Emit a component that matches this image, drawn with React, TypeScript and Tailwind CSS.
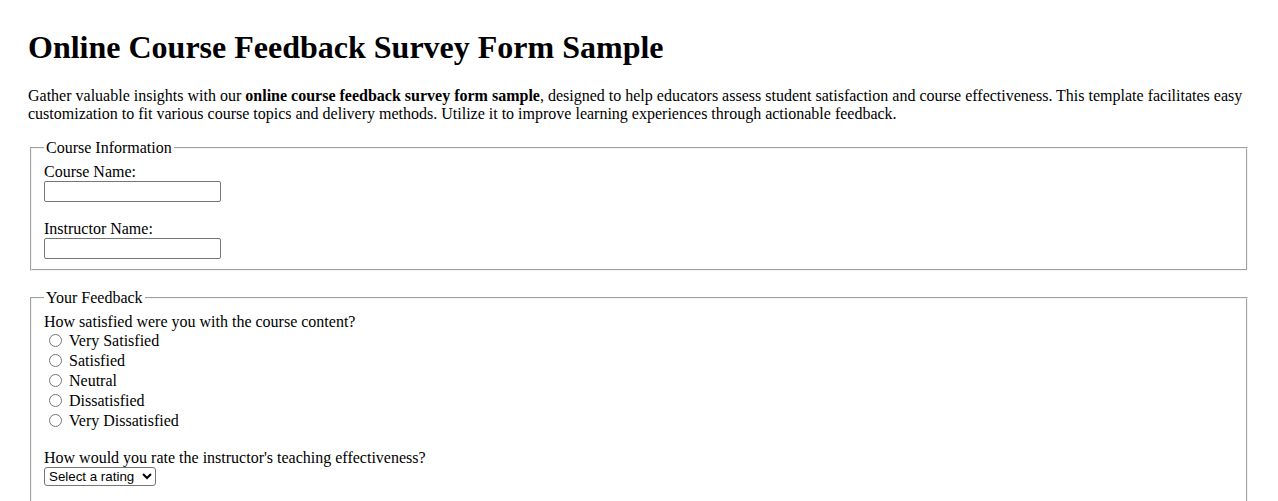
import React from "react";

export default function App() {
  const options = ["Very Satisfied", "Satisfied", "Neutral", "Dissatisfied", "Very Dissatisfied"];
  return (
    <div className="bg-white text-black min-h-screen px-[28px] pt-[29px] pb-[40px] text-[16px] leading-[normal] [font-family:'Liberation_Serif','Times_New_Roman',serif]">
      <h1 className="text-[32px] font-bold leading-[normal] mb-[21px]">Online Course Feedback Survey Form Sample</h1>
      <p className="mb-[16px]">
        Gather valuable insights with our <strong className="font-bold">online course feedback survey form sample</strong>, designed to help educators assess student satisfaction and course effectiveness. This template facilitates easy customization to fit various course topics and delivery methods. Utilize it to improve learning experiences through actionable feedback.
      </p>
      <form>
        <fieldset className="mx-[2px] border-2 [border-style:groove] border-[#f4f4f4] px-[12px] pt-[5.6px] pb-[10px]">
          <legend className="px-[2px]">Course Information</legend>
          <label className="block" htmlFor="course">Course Name:</label>
          <input id="course" type="text" className="block w-[177px] h-[21px] border border-[#767676] rounded-[2px] bg-white px-[2px]" />
          <div className="h-[18px]" />
          <label className="block" htmlFor="instructor">Instructor Name:</label>
          <input id="instructor" type="text" className="block w-[177px] h-[21px] border border-[#767676] rounded-[2px] bg-white px-[2px]" />
        </fieldset>
        <div className="h-[18px]" />
        <fieldset className="mx-[2px] border-2 [border-style:groove] border-[#f4f4f4] px-[12px] pt-[6.6px] pb-[10px]">
          <legend className="px-[2px]">Your Feedback</legend>
          <div>How satisfied were you with the course content?</div>
          {options.map((o) => (
            <div key={o} className="flex items-center h-[20px]">
              <input type="radio" name="satisfaction" className="m-[0_3px_1px_5px] w-[13px] h-[13px]" />
              <span className="ml-[4px]">{o}</span>
            </div>
          ))}
          <div className="h-[18px]" />
          <div>How would you rate the instructor's teaching effectiveness?</div>
          <select className="block w-[112px] h-[19px] border border-[#767676] rounded-[3px] bg-white text-[13.333px] [font-family:'Liberation_Sans',Arial,sans-serif]">
            <option>Select a rating</option>
            <option>Excellent</option>
            <option>Good</option>
            <option>Fair</option>
            <option>Poor</option>
          </select>
          <div className="h-[60px]" />
        </fieldset>
      </form>
    </div>
  );
}
